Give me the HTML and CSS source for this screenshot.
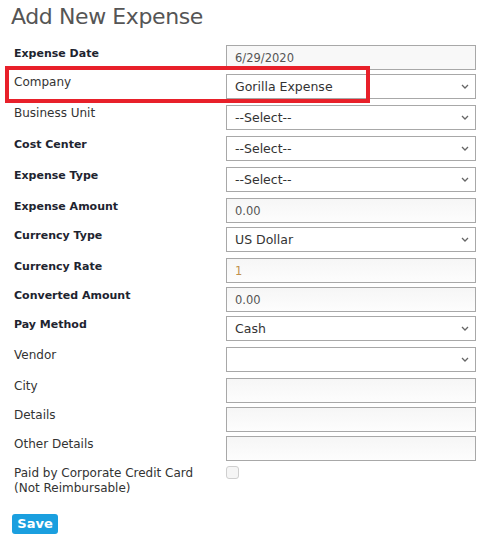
FILE: index.html
```html
<!DOCTYPE html>
<html lang="en">
<head>
<meta charset="utf-8">
<title>Add New Expense</title>
<link rel="stylesheet" href="styles.css">
</head>
<body>
<div class="page">
  <h1 class="title">Add New Expense</h1>
  <form class="form">
    <div class="row">
      <label class="lbl strong">Expense Date</label>
      <input class="ctl text readonly" type="text" value="6/29/2020">
    </div>
    <div class="row sel highlight">
      <label class="lbl">Company</label>
      <div class="ctl select"><span>Gorilla Expense</span><svg class="chev" width="8" height="5" viewBox="0 0 8 5"><path d="M1 1l3 3 3-3" fill="none" stroke="#666" stroke-width="1.3"/></svg></div>
      <span class="mark"></span>
    </div>
    <div class="row sel">
      <label class="lbl">Business Unit</label>
      <div class="ctl select"><span>--Select--</span><svg class="chev" width="8" height="5" viewBox="0 0 8 5"><path d="M1 1l3 3 3-3" fill="none" stroke="#666" stroke-width="1.3"/></svg></div>
    </div>
    <div class="row sel">
      <label class="lbl strong">Cost Center</label>
      <div class="ctl select"><span>--Select--</span><svg class="chev" width="8" height="5" viewBox="0 0 8 5"><path d="M1 1l3 3 3-3" fill="none" stroke="#666" stroke-width="1.3"/></svg></div>
    </div>
    <div class="row sel">
      <label class="lbl strong">Expense Type</label>
      <div class="ctl select"><span>--Select--</span><svg class="chev" width="8" height="5" viewBox="0 0 8 5"><path d="M1 1l3 3 3-3" fill="none" stroke="#666" stroke-width="1.3"/></svg></div>
    </div>
    <div class="row">
      <label class="lbl strong">Expense Amount</label>
      <input class="ctl text" type="text" value="0.00">
    </div>
    <div class="row sel">
      <label class="lbl strong">Currency Type</label>
      <div class="ctl select"><span>US Dollar</span><svg class="chev" width="8" height="5" viewBox="0 0 8 5"><path d="M1 1l3 3 3-3" fill="none" stroke="#666" stroke-width="1.3"/></svg></div>
    </div>
    <div class="row">
      <label class="lbl strong">Currency Rate</label>
      <input class="ctl text rate" type="text" value="1">
    </div>
    <div class="row">
      <label class="lbl strong">Converted Amount</label>
      <input class="ctl text" type="text" value="0.00">
    </div>
    <div class="row sel">
      <label class="lbl strong">Pay Method</label>
      <div class="ctl select"><span>Cash</span><svg class="chev" width="8" height="5" viewBox="0 0 8 5"><path d="M1 1l3 3 3-3" fill="none" stroke="#666" stroke-width="1.3"/></svg></div>
    </div>
    <div class="row sel">
      <label class="lbl">Vendor</label>
      <div class="ctl select"><span></span><svg class="chev" width="8" height="5" viewBox="0 0 8 5"><path d="M1 1l3 3 3-3" fill="none" stroke="#666" stroke-width="1.3"/></svg></div>
    </div>
    <div class="row">
      <label class="lbl">City</label>
      <input class="ctl text" type="text" value="">
    </div>
    <div class="row">
      <label class="lbl">Details</label>
      <input class="ctl text" type="text" value="">
    </div>
    <div class="row">
      <label class="lbl">Other Details</label>
      <input class="ctl text" type="text" value="">
    </div>
    <div class="row">
      <label class="lbl">Paid by Corporate Credit Card<br>(Not Reimbursable)</label>
      <span class="check"></span>
    </div>
    <button class="save" type="button">Save</button>
  </form>
</div>
</body>
</html>
```
FILE: styles.css
```css
body {
  margin: 0;
  background: #fff;
  font-family: "DejaVu Sans", "Open Sans", sans-serif;
  color: #333;
}
.page {
  padding: 0 0 0 14px;
}
.title {
  margin: 0 0 0 -3px;
  height: 45px;
  font-size: 22px;
  font-weight: 400;
  letter-spacing: -0.4px;
  line-height: 34px;
  color: #555;
}
.form {
  margin: 0;
}
.row {
  position: relative;
  display: flex;
  align-items: flex-start;
  margin-bottom: 4px;
}
.row.sel {
  margin-bottom: 6px;
}
.lbl {
  flex: none;
  width: 212px;
  padding-top: 1px;
  font-size: 12px;
  line-height: 15px;
  color: #333;
}
.lbl.strong {
  font-weight: 700;
  font-size: 11px;
  color: #1e2430;
}
.ctl {
  flex: none;
  box-sizing: border-box;
  width: 250px;
  height: 25px;
  margin: 0;
  border: 1px solid #a8a8a8;
  font-family: inherit;
  outline: none;
}
.text {
  padding: 0 8px;
  font-size: 11.5px;
  color: #555;
  background: linear-gradient(#f6f6f6, #fdfdfd);
}
.text.readonly {
  background: #f8f8f8;
}
.text.rate {
  color: #c0904c;
}
.select {
  display: flex;
  align-items: center;
  justify-content: space-between;
  padding: 0 6px 0 8px;
  background: #fff;
  font-size: 12.5px;
  color: #333;
}
.chev {
  display: block;
}
.mark {
  position: absolute;
  left: -9px;
  top: -8px;
  width: 365px;
  height: 37px;
  box-sizing: border-box;
  border: 4px solid #e8202a;
  pointer-events: none;
}
.check {
  flex: none;
  box-sizing: border-box;
  width: 13px;
  height: 13px;
  margin-top: 1px;
  border: 1px solid #cfcfcf;
  border-radius: 3px;
  background: #f5f5f5;
}
.save {
  display: block;
  margin: 18px 0 0 -2px;
  padding: 0;
  width: 46px;
  height: 20px;
  border: 0;
  border-radius: 3px;
  background: #1a9fdf;
  color: #fff;
  font-family: inherit;
  font-size: 13px;
  font-weight: 700;
  line-height: 20px;
}
```
